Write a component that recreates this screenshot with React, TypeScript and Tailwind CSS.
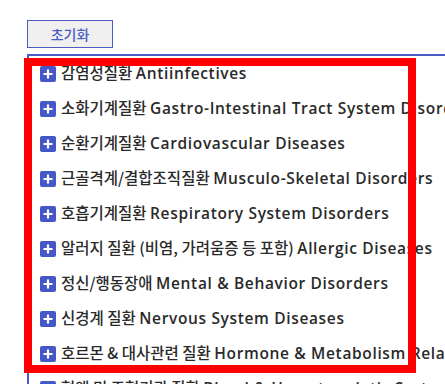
import React from 'react';

const items: [string, string][] = [
  ['감염성질환', 'Antiinfectives'],
  ['소화기계질환', 'Gastro-Intestinal Tract System Disorders'],
  ['순환기계질환', 'Cardiovascular Diseases'],
  ['근골격계/결합조직질환', 'Musculo-Skeletal Disorders'],
  ['호흡기계질환', 'Respiratory System Disorders'],
  ['알러지 질환 (비염, 가려움증 등 포함)', 'Allergic Diseases'],
  ['정신/행동장애', 'Mental & Behavior Disorders'],
  ['신경계 질환', 'Nervous System Diseases'],
  ['호르몬 & 대사관련 질환', 'Hormone & Metabolism Related Diseases'],
  ['혈액 및 조혈기관 질환', 'Blood & Hematopoietic System Disorders'],
];

function PlusBox() {
  return (
    <svg width="16" height="16" viewBox="0 0 16 16" className="shrink-0">
      <rect x="0" y="0" width="16" height="16" rx="2" fill="#4658c8" />
      <path d="M8 3.5v9M3.5 8h9" stroke="#fff" strokeWidth="2.2" />
    </svg>
  );
}

export default function App() {
  return (
    <div className="relative w-[445px] h-[384px] overflow-hidden bg-white pl-[27px] pt-[20px] font-[family-name:'Noto_Sans_CJK_KR','Noto_Sans',sans-serif]">
      <button className="w-[86px] h-[28px] border border-[#4a5cc6] bg-[#f0f0f0] text-[14px] font-medium text-[#4a5cc6] leading-none">
        초기화
      </button>
      <div className="mt-[6px] border-t-2 border-l-2 border-[#4a5cc6] pl-[11px]">
        {items.map(([ko, en]) => (
          <div key={ko} className="h-[35px] flex items-center gap-[5px] whitespace-nowrap text-[#2a2a2a]">
            <PlusBox />
            <span className="text-[15.5px] font-medium">
              {ko}{' '}
              <span className="font-[family-name:'Open_Sans','Noto_Sans_CJK_KR',sans-serif] text-[15.5px] font-semibold tracking-[0.65px]">{en}</span>
            </span>
          </div>
        ))}
      </div>
      <div className="absolute left-[24px] top-[58px] w-[392px] h-[315px] border-[8px] border-[#ff0000] pointer-events-none" />
    </div>
  );
}
